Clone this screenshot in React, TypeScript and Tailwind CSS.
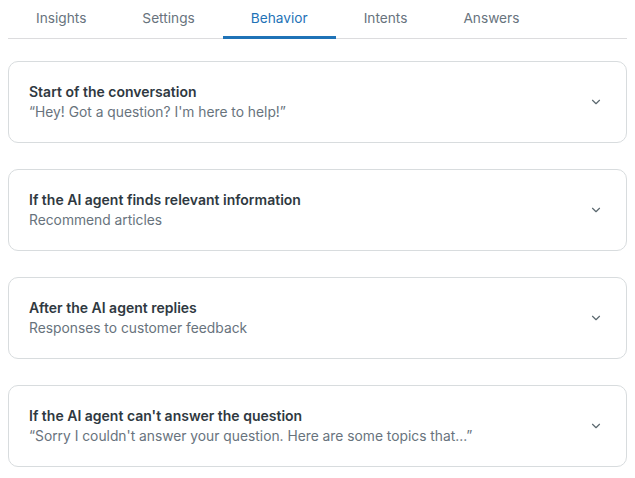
import { ChevronDown } from "lucide-react";

const tabs = ["Insights", "Settings", "Behavior", "Intents", "Answers"];

const sections = [
  { title: "Start of the conversation", detail: "“Hey! Got a question? I'm here to help!”" },
  { title: "If the AI agent finds relevant information", detail: "Recommend articles" },
  { title: "After the AI agent replies", detail: "Responses to customer feedback" },
  {
    title: "If the AI agent can't answer the question",
    detail: "“Sorry I couldn't answer your question. Here are some topics that...”",
  },
];

export default function App() {
  return (
    <div className="min-h-screen bg-white px-2 font-['Inter','Noto_Sans',sans-serif] text-[14px]">
      <div className="flex border-b border-[#dcdcde]">
        {tabs.map((tab) => {
          const active = tab === "Behavior";
          return (
            <button
              key={tab}
              type="button"
              className={`-mb-px flex h-[39px] items-center border-b-[3px] px-7 pt-[1px] text-[13.7px] ${
                active ? "border-[#1f73b7] text-[#1f73b7]" : "border-transparent text-[#68737d]"
              }`}
            >
              {tab}
            </button>
          );
        })}
      </div>

      <div className="mt-[22px] flex flex-col gap-[26px]">
        {sections.map((s) => (
          <div
            key={s.title}
            className="flex h-[82px] items-center justify-between rounded-[10px] border border-[#d8dcde] pl-5 pr-5"
          >
            <div className="flex flex-col gap-[2px] pb-[1px]">
              <p className="text-[14px] font-semibold leading-[18px] text-[#2f3941]">{s.title}</p>
              <p className="text-[13.8px] leading-[18px] text-[#68737d]">{s.detail}</p>
            </div>
            <ChevronDown className="mr-[3px] h-[14px] w-[14px] text-[#5c6970]" strokeWidth={2} />
          </div>
        ))}
      </div>
    </div>
  );
}
